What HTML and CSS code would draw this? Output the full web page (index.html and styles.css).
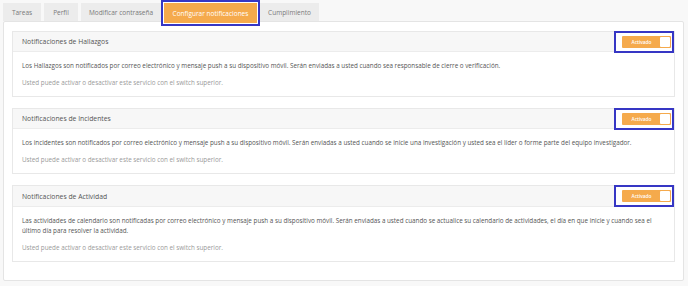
FILE: index.html
```html
<!DOCTYPE html>
<html lang="es">
<head>
<meta charset="utf-8">
<title>Configurar notificaciones</title>
<link rel="stylesheet" href="styles.css">
</head>
<body>
<nav class="tabs">
  <a class="tab tab-tareas">Tareas</a>
  <a class="tab tab-perfil">Perfil</a>
  <a class="tab tab-pass">Modificar contraseña</a>
  <a class="tab tab-notif active">Configurar notificaciones</a>
  <a class="tab tab-cumpl">Cumplimiento</a>
</nav>
<main class="panel">
  <section class="card">
    <header class="card-head">
      <span class="card-title">Notificaciones de Hallazgos</span>
      <span class="hl"><span class="switch"><span class="switch-label">Activado</span><span class="knob"></span></span></span>
    </header>
    <div class="card-body">
      <p class="desc">Los Hallazgos son notificados por correo electrónico y mensaje push a su dispositivo móvil. Serán enviadas a usted cuando sea responsable de cierre o verificación.</p>
      <p class="hint">Usted puede activar o desactivar este servicio con el switch superior.</p>
    </div>
  </section>
  <section class="card">
    <header class="card-head">
      <span class="card-title">Notificaciones de Incidentes</span>
      <span class="hl"><span class="switch"><span class="switch-label">Activado</span><span class="knob"></span></span></span>
    </header>
    <div class="card-body">
      <p class="desc">Los incidentes son notificados por correo electrónico y mensaje push a su dispositivo móvil. Serán enviadas a usted cuando se inicie una investigación y usted sea el líder o forme parte del equipo investigador.</p>
      <p class="hint">Usted puede activar o desactivar este servicio con el switch superior.</p>
    </div>
  </section>
  <section class="card">
    <header class="card-head card-head-tall">
      <span class="card-title">Notificaciones de Actividad</span>
      <span class="hl"><span class="switch"><span class="switch-label">Activado</span><span class="knob"></span></span></span>
    </header>
    <div class="card-body">
      <p class="desc">Las actividades de calendario son notificadas por correo electrónico y mensaje push a su dispositivo móvil. Serán enviadas a usted cuando se actualice su calendario de actividades, el día en que inicie y cuando sea el último día para resolver la actividad.</p>
      <p class="hint">Usted puede activar o desactivar este servicio con el switch superior.</p>
    </div>
  </section>
</main>
</body>
</html>
```
FILE: styles.css
```css
* { box-sizing: border-box; }
html, body { margin: 0; padding: 0; }
body {
  background: #f8f8f8;
  font-family: "Open Sans", "Noto Sans", sans-serif;
  color: #555;
  width: 688px;
  height: 286px;
  overflow: hidden;
}
.tabs {
  display: flex;
  align-items: flex-start;
  gap: 3px;
  height: 21px;
  padding: 3px 0 0 3px;
}
.tab {
  display: flex;
  align-items: center;
  justify-content: center;
  height: 18px;
  background: #ececec;
  color: #7a7a7a;
  font-size: 6.5px;
  white-space: nowrap;
}
.tab-tareas { width: 38px; }
.tab-perfil { width: 34px; }
.tab-pass { width: 80px; }
.tab-notif { width: 93px; }
.tab-cumpl { width: 59px; }
.tab.active {
  position: relative;
  z-index: 2;
  height: 20px;
  background: #f5aa4c;
  color: #fff;
  box-shadow: 0 0 0 1px #fff, 0 0 0 3px #3636c4;
}
.panel {
  margin: 0 4px 0 3px;
  height: 260px;
  background: #fff;
  border: 1px solid #e4e4e4;
  border-radius: 2px;
  padding: 9px 8px 0 8px;
  display: flex;
  flex-direction: column;
  gap: 11px;
}
.card {
  border: 1px solid #e8e8e8;
  background: #fff;
}
.card-head {
  height: 20px;
  background: #f7f7f7;
  border-bottom: 1px solid #ececec;
  display: flex;
  align-items: center;
  justify-content: space-between;
  padding: 0 0 0 9px;
}
.card-head-tall { height: 21px; }
.card-title {
  font-size: 6.8px;
  color: #555;
}
.hl {
  display: flex;
  border: 2px solid #3636c4;
  padding: 3px 1px 3px 6px;
  background: #fff;
}
.switch {
  display: flex;
  align-items: center;
  width: 49px;
  height: 12px;
  background: #f5aa4c;
  border-radius: 1px;
  padding: 1px;
}
.switch-label {
  flex: 1;
  text-align: center;
  color: #fff;
  font-size: 4.8px;
  font-weight: 600;
}
.knob {
  width: 10px;
  height: 10px;
  background: #fff;
  border-radius: 1px;
}
.card-body {
  padding: 9px 9px 8px 9px;
}
.card-body p {
  margin: 0;
  font-size: 6.3px;
  line-height: 10px;
}
.card-body p + p { margin-top: 7px; }
.desc { color: #555; }
.hint { color: #9a9a9a; }
```
